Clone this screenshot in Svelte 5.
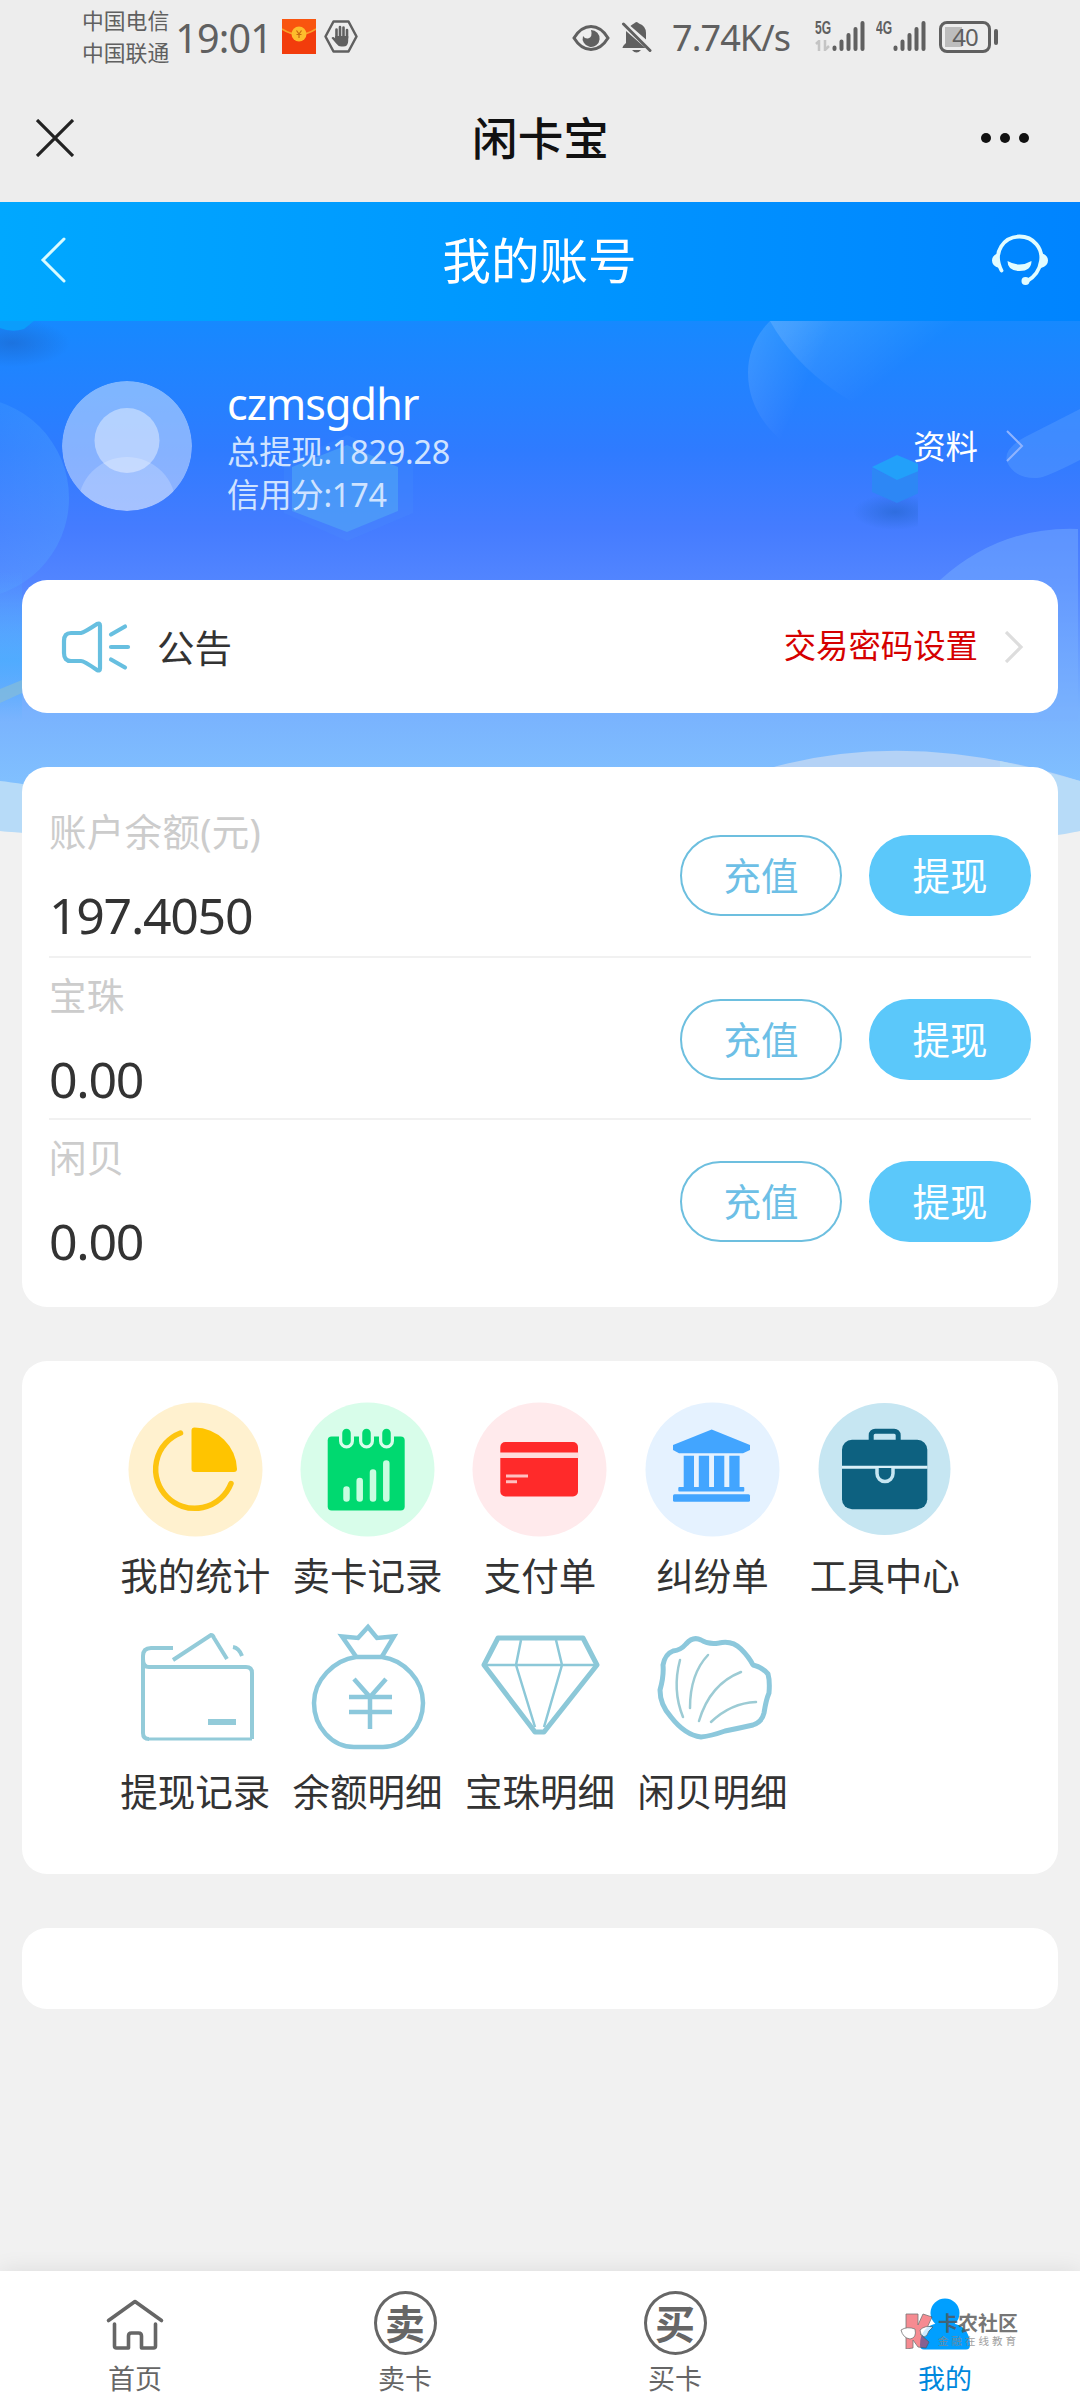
<script lang="ts">
    type Account = { label: string; value: string };
    type Tool = { icon: string; label: string };

    const accounts: Account[] = [
        { label: "账户余额(元)", value: "197.4050" },
        { label: "宝珠", value: "0.00" },
        { label: "闲贝", value: "0.00" },
    ];

    const tools: Tool[] = [
        { icon: "stats", label: "我的统计" },
        { icon: "sales", label: "卖卡记录" },
        { icon: "payment", label: "支付单" },
        { icon: "dispute", label: "纠纷单" },
        { icon: "toolbox", label: "工具中心" },
        { icon: "wallet", label: "提现记录" },
        { icon: "bag", label: "余额明细" },
        { icon: "diamond", label: "宝珠明细" },
        { icon: "shell", label: "闲贝明细" },
    ];

    const tabs = [
        { icon: "home", label: "首页" },
        { icon: "卖", label: "卖卡" },
        { icon: "买", label: "买卡" },
        { icon: "me", label: "我的" },
    ];

    let active = $state("me");
</script>

{#snippet signal()}
    <svg class="signal" width="33" height="32" viewBox="0 0 33 32" stroke="#606060" stroke-width="4" stroke-linecap="round">
        <path d="M2.5 27.5v1.5M9.5 21.500v7.500M16.500 15v14M23.500 9v20M30.500 3v26" />
    </svg>
{/snippet}

<div class="page">
    <div class="status">
        <div class="carriers">
            <span>中国电信</span>
            <span>中国联通</span>
        </div>
        <span class="time">19:01</span>
        <svg class="packet" width="34" height="35" viewBox="0 0 34 35">
            <rect width="34" height="35" fill="#f23c0c" />
            <path d="M0 0h34v10Q17 22 0 10z" fill="#f9550f" />
            <path d="M0 10Q17 21 34 10" fill="none" stroke="#f9a02a" stroke-width="1.500" />
            <circle cx="17" cy="15" r="7.500" fill="#fdbd2c" />
            <path d="M14.500 11.500 17 15l2.500-3.500M17 15v4M14.500 15.500h5" fill="none" stroke="#c96a10" stroke-width="1.200" />
        </svg>
        <svg class="hand" width="34" height="33" viewBox="0 0 34 33">
            <path d="M9.500 1.500h15l8 15-8 15h-15l-8-15z" fill="none" stroke="#606060" stroke-width="2.500" stroke-linejoin="round" />
            <path d="M12.500 18V9.500M16 17V7M19.500 17V7.500M23 18v-8" stroke="#606060" stroke-width="2.600" stroke-linecap="round" />
            <path d="M11.200 16h13v5q0 5.500-5 5.500h-2q-3 0-5-3L7.500 18q1.500-2 3.700.500z" fill="#606060" />
        </svg>

        <div class="status-right">
            <svg width="38" height="28" viewBox="0 0 38 28">
                <path d="M2 14Q9 2.500 19 2.500T36 14Q29 25.500 19 25.500T2 14z" fill="none" stroke="#606060" stroke-width="3" />
                <path d="M19 6a8.500 8.500 0 1 1-8 6q2 3 5 2.500 5-1.500 3-8.500z" fill="#606060" />
            </svg>
            <svg class="bell" width="31" height="33" viewBox="0 0 31 33" fill="#606060">
                <path d="M10 4.500Q12 3 13 2.500q2.500-3 5 0Q25 5 25 12v6.500L9.500 5z" />
                <path d="M5 10 24.500 27H1.500q0-2 3.500-5zM11 29h9q-4.500 5-9 0z" />
                <path d="M2.500 3 29 29.500" stroke="#606060" stroke-width="3" stroke-linecap="round" />
            </svg>
            <span class="speed">7.74K/s</span>
            <div class="network">
                <span>5G</span>
                <svg width="15" height="11" viewBox="0 0 15 11" fill="none" stroke="#c4c4c4" stroke-width="2.500">
                    <path d="M1 4l3-3v10M10 0v10l4-4" />
                </svg>
            </div>
            {@render signal()}
            <div class="network second"><span>4G</span></div>
            {@render signal()}
            <div class="battery"><span>40</span></div>
        </div>
    </div>

    <div class="titlebar">
        <svg width="38" height="38" viewBox="0 0 38 38" stroke="#222" stroke-width="3.200">
            <path d="M1 1l36 36M37 1 1 37" />
        </svg>
        <h1>闲卡宝</h1>
        <svg width="48" height="10" viewBox="0 0 48 10" fill="#111">
            <circle cx="5" cy="5" r="5" /><circle cx="24" cy="5" r="5" /><circle cx="43" cy="5" r="5" />
        </svg>
    </div>

    <header>
        <svg width="26" height="46" viewBox="0 0 26 46" fill="none" stroke="#d9fbff" stroke-width="3" stroke-linecap="round">
            <path d="M24 2 3 23l21 21" />
        </svg>
        <h2>我的账号</h2>
        <svg width="56" height="52" viewBox="0 0 56 52" fill="none" stroke="#e2fcff" stroke-width="3.800" stroke-linecap="round">
            <path d="M9.500 36.500C-.500 17 13 2.500 27.500 2.500S51 15 49 27c-1.500 10-7 16.500-14.500 20.500" />
            <path d="M7 19v15Q0 32 0 26.500T7 19zM49 19v15q7-2 7-7.500T49 19z" fill="#e2fcff" stroke="none" />
            <circle cx="33.500" cy="47" r="4" fill="#e2fcff" stroke="none" />
            <path d="M15.500 27q12 7 24 0 0 10-12 10t-12-10z" fill="#e2fcff" stroke="none" />
        </svg>
    </header>

    <main>
        <svg class="backdrop" width="1080" height="520" viewBox="0 0 1080 520">
            <defs>
                <linearGradient id="sky" x1="0" y1="0" x2="0" y2="1">
                    <stop offset="0" stop-color="#1689ff" />
                    <stop offset=".25" stop-color="#2f7bff" />
                    <stop offset=".4" stop-color="#457cff" />
                    <stop offset=".5" stop-color="#5285ff" />
                    <stop offset=".75" stop-color="#79b2fe" />
                    <stop offset="1" stop-color="#86cbff" />
                </linearGradient>
                <linearGradient id="side" x1="0" y1="0" x2="0" y2="1">
                    <stop offset="0" stop-color="#4ab4ff" stop-opacity="0" />
                    <stop offset=".6" stop-color="#4aaeff" stop-opacity=".8" />
                    <stop offset="1" stop-color="#4ab4ff" stop-opacity="0" />
                </linearGradient>
                <linearGradient id="bubble" x1="0" y1=".2" x2=".8" y2=".7">
                    <stop offset="0" stop-color="#fff" stop-opacity=".13" />
                    <stop offset=".6" stop-color="#fff" stop-opacity="0" />
                </linearGradient>
                <linearGradient id="orb" x1="0" y1="0" x2="1" y2="0">
                    <stop offset="0" stop-color="#58b0ff" stop-opacity="0" />
                    <stop offset="1" stop-color="#58b0ff" stop-opacity=".3" />
                </linearGradient>
                <radialGradient id="shade">
                    <stop offset="0" stop-color="#1d5fc0" stop-opacity=".5" />
                    <stop offset="1" stop-color="#1d5fc0" stop-opacity="0" />
                </radialGradient>
                <clipPath id="cube"><path d="M840 120h78v90h-78z" /></clipPath>
            </defs>
            <path d="M0 0h1080v510q-540 20-1080 0z" fill="url(#sky)" />
            <rect y="250" width="22" height="150" fill="url(#side)" />
            <ellipse cx="12" cy="22" rx="58" ry="24" fill="url(#shade)" />
            <path d="M0 0h34L24 8Q12 12 0 7z" fill="#0b9dfb" />
            <circle cx="-32" cy="177" r="101" fill="url(#orb)" />
            <path d="M770 0Q748 22 748 52c0 50 45 90 110 100V0z" fill="url(#bubble)" />
            <path d="M770 0Q815 80 935 116L1010 0z" fill="url(#bubble)" />
            <path d="M1080 88 1025 116q-22 12-18 25 8 17 30 16 8 0 43-18z" fill="#5ea2ff" opacity=".38" />
            <path d="M940 259Q1000 205 1078 208V400H880z" fill="#7ab2ff" opacity=".45" />
            <path d="M347 114 413 142v50l-66 28-63-28v-50z" fill="#55a6f5" opacity=".12" />
            <path d="M347 124 398 146v44l-51 21-55-21v-44z" fill="#55b0f5" opacity=".48" />
            <path d="M0 368 22 359v13L0 382z" fill="#84bcd8" opacity=".7" />
            <g clip-path="url(#cube)">
                <ellipse cx="895" cy="191" rx="42" ry="18" fill="url(#shade)" />
                <path d="M872 147l25 11 24-10v23l-24 11-25-11z" fill="#2d87f5" />
                <path d="M872 146l25-12 24 10v5l-24 10z" fill="#22a0fa" />
            </g>
            <path d="M760 450Q905 405 1080 460H760z" fill="#b4d2f6" />
            <path d="M0 460q20 2 60 10v45L0 510zM1000 440q50 12 80 20v50q-40 9-80 6z" fill="#b7dbf8" />
        </svg>

        <section class="profile">
            <svg class="avatar" width="130" height="130" viewBox="0 0 130 130">
                <defs>
                    <clipPath id="face"><circle cx="65" cy="65" r="65" /></clipPath>
                </defs>
                <g clip-path="url(#face)" fill="#fff">
                    <circle cx="65" cy="65" r="65" opacity=".42" />
                    <circle cx="65" cy="59.500" r="32.500" opacity=".4" />
                    <circle cx="65" cy="125" r="49" opacity=".2" />
                </g>
            </svg>
            <div class="who">
                <strong>czmsgdhr</strong>
                <span>总提现:1829.28</span>
                <span>信用分:174</span>
            </div>
            <a class="info" href="#info">
                资料
                <svg width="19" height="32" viewBox="0 0 19 32" fill="none" stroke="#8fb4ff" stroke-width="2">
                    <path d="M2 1l15 15L2 31" />
                </svg>
            </a>
        </section>

        <section class="card notice">
            <svg width="70" height="54" viewBox="0 0 70 54" fill="none" stroke="#67bfe0" stroke-width="4.200" stroke-linecap="round" stroke-linejoin="round">
                <path d="M10 13h10q3-.500 16-9 3-1.500 3 1.500v43q0 3-3 1.500-13-9-16-9H10q-7 0-7-8V21q0-8 7-8zM50 14.500 64 6.500M50 27h17M50 39.500l14 8" />
            </svg>
            <span class="headline">公告</span>
            <a href="#password">
                <span>交易密码设置</span>
                <svg width="19" height="32" viewBox="0 0 19 32" fill="none" stroke="#ddd" stroke-width="3.200">
                    <path d="M1 1l15 15L1 31" />
                </svg>
            </a>
        </section>

        <section class="card accounts">
            {#each accounts as account}
                <div class="account">
                    <div class="amount">
                        <span class="label">{account.label}</span>
                        <span class="value">{account.value}</span>
                    </div>
                    <button class="outline">充值</button>
                    <button class="solid">提现</button>
                </div>
            {/each}
        </section>

        <section class="card tools">
            {#each tools as tool}
                <div class="tool">
                    <svg width="135" height="135" viewBox="0 0 135 135">
                        {#if tool.icon === "stats"}
                            <circle cx="67.500" cy="67.500" r="67" fill="#fff1cf" />
                            <path d="M66.500 25.500A43 43 0 0 1 109 67q0 3-3 3H66.500q-3 0-3-3V28.500q0-3 3-3z" fill="#ffc400" />
                            <path d="M52.500 31A39 39 0 1 0 103 81.500" fill="none" stroke="#fdc410" stroke-width="5.500" stroke-linecap="round" />
                        {:else if tool.icon === "sales"}
                            <circle cx="67.500" cy="67.500" r="67" fill="#d8fdea" />
                            <rect x="27.700" y="34.500" width="77" height="74" rx="4" fill="#00d970" />
                            <path d="M46.500 31v8M66.500 31v8M86.500 31v8" stroke="#d8fdea" stroke-width="15" stroke-linecap="round" />
                            <path d="M46.500 31v8M66.500 31v8M86.500 31v8" stroke="#00d970" stroke-width="8.500" stroke-linecap="round" />
                            <path d="M46.500 87.500v9M59.700 79v17.500M73 70.500v26M86.300 61.500v35" stroke="#c8fde0" stroke-width="6.500" stroke-linecap="round" />
                        {:else if tool.icon === "payment"}
                            <circle cx="67.500" cy="67.500" r="67" fill="#ffeaec" />
                            <rect x="28.300" y="40" width="77.700" height="54.500" rx="5" fill="#ff2a2a" />
                            <path d="M28 53.300h78.500" stroke="#ffdcdc" stroke-width="5.500" />
                            <path d="M34 74h22M34 79.700h11" stroke="#ffc0c0" stroke-width="3" />
                        {:else if tool.icon === "dispute"}
                            <circle cx="67.500" cy="67.500" r="67" fill="#e5f2ff" />
                            <g fill="#42a5ff">
                                <path d="M66.700 27.500 105 43v5l-7 3.300H34L28 48v-5z" />
                                <path d="M38.700 53.700h10.300V85H38.700zM53.800 53.700h10.300V85H53.800zM69 53.700h10.300V85H69zM84.300 53.700h10.300V85H84.300z" />
                                <rect x="33.300" y="85" width="66" height="4.500" rx="1" />
                                <rect x="28" y="92.300" width="77" height="7.500" rx="1.500" />
                            </g>
                        {:else if tool.icon === "toolbox"}
                            <g transform="translate(1)">
                                <circle cx="66.500" cy="67" r="66" fill="#c6e6f2" />
                                <rect x="53.200" y="29.200" width="27" height="20" rx="4" fill="none" stroke="#0d6180" stroke-width="5" />
                                <rect x="24" y="37.700" width="85.300" height="69.600" rx="10" fill="#0d6180" />
                                <path d="M24 65.200h85.500" stroke="#d9f0f8" stroke-width="3" />
                                <path d="M59 66v5.500a8 8 0 0 0 16 0V66" fill="#0d6180" stroke="#c6e6f2" stroke-width="3.500" />
                            </g>
                        {:else if tool.icon === "wallet"}
                            <g fill="none" stroke="#93cbd9" stroke-width="4">
                                <path d="M45 30H23q-8 0-8 8v77q0 6 6 6" />
                                <path d="M20 121h104" stroke-width="3" />
                                <path d="M15 41q0 8 6 8h97q6 0 6 6v66" />
                                <path d="M45 42l38-25q2 0 3 3l13 21M105 29q6 1 9 9" />
                                <path d="M80 104h28" stroke-width="6" />
                            </g>
                        {:else if tool.icon === "bag"}
                            <g fill="none" stroke="#8cc8dc" stroke-width="4.500">
                                <path d="M56 38.500 42 18.500l16 1.500L68 9l9 11 17-1.500-12 20" />
                                <path d="M56 39h26c22 3 41 23 41 46 0 24-19 44-40 44H54c-22 0-40-20-40-44 0-23 20-43 42-46z" />
                                <path d="M54 61l16 18 16-18M70 79v32M49 79h43M49 94h43" />
                            </g>
                        {:else if tool.icon === "diamond"}
                            <g fill="none" stroke="#8cc8d8" stroke-width="5" stroke-linejoin="round">
                                <path d="M26 20h85l14 27-53 67h-9L12 47z" />
                                <path d="M12 47h113M49 22l-5 25 19 62M84 22l6 25-18 62" stroke-width="2.500" />
                            </g>
                        {:else}
                            <g fill="none" stroke="#8cc8dc" stroke-width="5" stroke-linejoin="round" stroke-linecap="round">
                                <path d="M28 33q8-1 13-7 7-8 15-4 8 5 18 3 13-3 22 6 8 8 12 16 9 2 15 9 2 7 1 19-3 7-5 20-2 9-11 12-13 3-28 6-14 5-24 6-16-2-30-20-11-12-11-27 4-14 3-25 2-11 10-14z" />
                                <path d="M35 42q-8 30 3 57M63 37Q45 56 45 90M96 54Q65 66 54 103M111 84Q86 85 66 104" stroke="#9ccbd4" stroke-width="2.500" />
                            </g>
                        {/if}
                    </svg>
                    <span>{tool.label}</span>
                </div>
            {/each}
        </section>

        <section class="card blank"></section>
    </main>

    <nav>
        {#each tabs as tab}
            <button class="tab" class:active={active === tab.icon} onclick={() => (active = tab.icon)}>
                {#if tab.icon === "home"}
                    <svg width="64" height="64" viewBox="0 0 64 64" fill="none" stroke="#666" stroke-width="3.600" stroke-linecap="round" stroke-linejoin="round">
                        <path d="M5.500 29.500 32 10.500l26.500 19" />
                        <path d="M11.500 33v22q0 2 2 2h12V45q0-3 3-3h7q3 0 3 3v12h12q2 0 2-2V33" />
                    </svg>
                {:else if tab.icon === "me"}
                    <svg width="64" height="64" viewBox="0 0 64 64" fill="#009fff">
                        <circle cx="32" cy="22" r="14.500" />
                        <path d="M7 54c0-14 8-20 17-21.500q8 5 16 0C49 34 57 40 57 54q0 4.500-4 4.500H11q-4 0-4-4.500z" />
                    </svg>
                {:else}
                    <span class="coin">{tab.icon}</span>
                {/if}
                <span>{tab.label}</span>
            </button>
        {/each}
        <div class="watermark">
            <svg width="34" height="36" viewBox="0 0 34 36" stroke="#555" stroke-width=".8">
                <path d="M6 1h12v11l5-11 9 3-6 13-6 4 9 8-3 6-8-1-5-7v8l-7 1z" fill="#f0323c" fill-opacity=".7" />
                <path d="M1 17q6-4 14-1 2 9-5 10-7-1-9-9zM20 17q5-5 13-3l-4 4q-2 6-5 6-4-2-4-7z" fill="#fff" />
            </svg>
            <div class="brand">
                <b>卡农社区</b>
                <small>金融在线教育</small>
            </div>
        </div>
    </nav>
</div>

<style>
    :global(body) {
        background: #f1f1f1;
    }

    .page {
        width: 1080px;
        height: 2400px;
        display: flex;
        flex-direction: column;
        overflow: hidden;
        font-family: "Noto Sans", "Noto Sans CJK SC", sans-serif;
        color: #333;
        background: #f1f1f1;
    }

    svg {
        display: block;
        flex: none;
    }

    h1,
    h2 {
        margin: 0;
    }

    a {
        color: inherit;
        text-decoration: none;
    }

    button {
        font-family: inherit;
        padding: 0;
        border: 0;
        background: none;
    }

    .status {
        height: 76px;
        box-sizing: border-box;
        padding: 0 82px;
        display: flex;
        align-items: center;
        color: #606060;
        background: #ededed;
    }

    .carriers {
        display: flex;
        flex-direction: column;
        margin-bottom: 2px;
        font-size: 21.8px;
        line-height: 32px;
        white-space: nowrap;
    }

    .time {
        width: 96px;
        margin-left: 6px;
        font-size: 39.5px;
        line-height: 74px;
        letter-spacing: -0.8px;
        white-space: nowrap;
    }

    .packet {
        margin-left: 11px;
        margin-bottom: 4px;
    }

    .hand {
        margin-left: 8px;
        margin-bottom: 4px;
    }

    .status-right {
        margin-left: auto;
        display: flex;
        align-items: center;
    }

    .bell {
        margin-left: 11px;
        margin-bottom: 2px;
    }

    .speed {
        width: 121px;
        margin-left: 20px;
        font-size: 36px;
        line-height: 76px;
        letter-spacing: -0.9px;
        white-space: nowrap;
    }

    .network {
        width: 17px;
        height: 32px;
        margin-left: 22px;
        margin-bottom: 4px;

        &.second {
            margin-left: 11px;
        }

        & span {
            display: block;
            width: 26px;
            font-family: "Liberation Sans", sans-serif;
            font-size: 18px;
            font-weight: 700;
            line-height: 16px;
            transform: scaleX(0.67);
            transform-origin: left;
        }

        & svg {
            margin-top: 4px;
        }
    }

    .signal {
        margin-bottom: 4px;
    }

    .battery {
        position: relative;
        width: 52px;
        height: 32px;
        box-sizing: border-box;
        margin: 0 7px 3px 13px;
        border: 3px solid #606060;
        border-radius: 8px;
        background: linear-gradient(90deg, #bdbdbd 17px, transparent 17px) 3px 3px / 40px 20px no-repeat;
        font-size: 24px;
        line-height: 25px;
        text-align: center;
        letter-spacing: -1px;

        &::after {
            content: "";
            position: absolute;
            right: -10px;
            top: 5px;
            width: 4px;
            height: 16px;
            border-radius: 2px;
            background: #606060;
        }
    }

    .titlebar {
        height: 126px;
        box-sizing: border-box;
        padding: 0 51px 3px 36px;
        display: flex;
        align-items: center;
        justify-content: space-between;
        background: #ededed;
        color: #111;

        & h1 {
            padding-left: 26px;
            font-size: 45.6px;
            font-weight: 500;
            line-height: 60px;
        }
    }

    header {
        height: 119px;
        box-sizing: border-box;
        padding: 0 32px 4px 40px;
        display: flex;
        align-items: center;
        justify-content: space-between;
        color: #fff;
        background: linear-gradient(90deg, #00a8ff, #0084ff);

        & h2 {
            padding-left: 21px;
            font-size: 48.6px;
            font-weight: 400;
            line-height: 60px;
        }
    }

    main {
        position: relative;
        flex: 1;
        padding: 0 22px;
    }

    .backdrop {
        position: absolute;
        left: 0;
        top: 0;
    }

    .profile {
        position: relative;
        height: 259px;
        display: flex;
        align-items: flex-start;
        color: #fff;
    }

    .avatar {
        margin: 60px 0 0 40px;
    }

    .who {
        margin: 56px 0 0 35px;
        display: flex;
        flex-direction: column;

        & strong {
            font-size: 43px;
            font-weight: 400;
            line-height: 53px;
            letter-spacing: -0.9px;
        }

        & span {
            font-size: 32.4px;
            line-height: 43px;
            letter-spacing: -0.25px;
            color: #cfe3ff;
        }
    }

    .info {
        margin: 101px 34px 0 auto;
        display: flex;
        align-items: center;
        gap: 27px;
        font-size: 32.4px;
        line-height: 48px;
    }

    .card {
        position: relative;
        border-radius: 25px;
        background: #fff;
    }

    .notice {
        height: 133px;
        box-sizing: border-box;
        padding: 0 34px 0 39px;
        display: flex;
        align-items: center;

        & .headline {
            margin: -2px 0 0 26px;
            font-size: 37.5px;
        }

        & a {
            margin-left: auto;
            display: flex;
            align-items: center;
            gap: 27px;
            color: #d50000;
            font-size: 32.4px;
        }

        & a span {
            padding-bottom: 7px;
        }
    }

    .accounts {
        height: 540px;
        box-sizing: border-box;
        margin-top: 54px;
        padding: 27px 27px 0;
    }

    .account {
        height: 162px;
        box-sizing: border-box;
        padding-top: 4px;
        display: flex;
        align-items: flex-start;
        gap: 27px;

        &:not(:last-child) {
            border-bottom: 2px solid #f1f1f1;
        }

        &:first-child {
            height: 164px;
        }

        & button {
            width: 162px;
            height: 81px;
            margin-top: 37px;
            border: 2px solid #6dbfdf;
            border-radius: 41px;
            font-size: 37.5px;
            line-height: 75px;
        }

        & .outline {
            color: #6dbfe6;
        }

        & .solid {
            border-color: #5bc8fa;
            background: #5bc8fa;
            color: #fff;
        }
    }

    .amount {
        flex: 1;
        display: flex;
        flex-direction: column;
    }

    .label {
        padding-top: 6px;
        font-size: 37.5px;
        line-height: 56px;
        letter-spacing: 0.3px;
        color: #ccc;
    }

    .value {
        padding-top: 17px;
        font-size: 50px;
        line-height: 76px;
        letter-spacing: -1.3px;
    }

    .tools {
        height: 513px;
        box-sizing: border-box;
        margin-top: 54px;
        padding: 41px 87px 0;
        display: grid;
        grid-template-columns: repeat(5, 1fr);
        grid-auto-rows: 216px;
    }

    .tool {
        display: flex;
        flex-direction: column;
        align-items: center;
        font-size: 37.5px;
        line-height: 78px;
        white-space: nowrap;
    }

    .blank {
        height: 81px;
        margin-top: 54px;
    }

    nav {
        position: relative;
        height: 129px;
        display: flex;
        background: #fff;
        box-shadow: 0 0 22px rgba(0, 0, 0, 0.09);
    }

    .tab {
        flex: 1;
        padding-top: 20px;
        display: flex;
        flex-direction: column;
        align-items: center;
        font-size: 27px;
        line-height: 47px;
        color: #666;

        &.active {
            color: #0088dd;
        }
    }

    .coin {
        width: 63px;
        height: 64px;
        box-sizing: border-box;
        border: 3px solid #666;
        border-radius: 50%;
        font-size: 40px;
        font-weight: 700;
        line-height: 59px;
        text-align: center;
    }

    .watermark {
        position: absolute;
        left: 900px;
        top: 42px;
        display: flex;
        gap: 4px;
        color: #555;
        opacity: 0.8;
    }

    .brand {
        display: flex;
        flex-direction: column;
        white-space: nowrap;

        & b {
            font-size: 20px;
            line-height: 22px;
        }

        & small {
            font-size: 10.5px;
            line-height: 13px;
            letter-spacing: 3px;
            color: #888;
        }
    }
</style>
